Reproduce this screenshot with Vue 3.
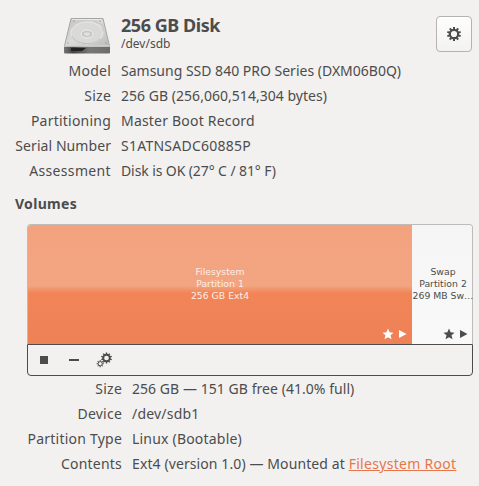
<script setup>
import { ref } from 'vue'

const driveInfo = [
  { label: 'Model', value: 'Samsung SSD 840 PRO Series (DXM06B0Q)', key: 'model' },
  { label: 'Size', value: '256 GB (256,060,514,304 bytes)', key: 'bytes' },
  { label: 'Partitioning', value: 'Master Boot Record', key: 'scheme' },
  { label: 'Serial Number', value: 'S1ATNSADC60885P', key: 'serial' },
  { label: 'Assessment', value: 'Disk is OK (27° C / 81° F)', key: 'health' },
]

const volumes = [
  { id: 1, lines: ['Filesystem', 'Partition 1', '256 GB Ext4'] },
  { id: 2, lines: ['Swap', 'Partition 2', '269 MB Sw…'] },
]

const selected = ref(1)

const volumeInfo = [
  { label: 'Size', value: '256 GB — 151 GB free (41.0% full)', key: 'free' },
  { label: 'Device', value: '/dev/sdb1', key: 'device' },
  { label: 'Partition Type', value: 'Linux (Bootable)', key: 'type' },
  { label: 'Contents', value: 'Ext4 (version 1.0) — Mounted at ', link: 'Filesystem Root', key: 'contents' },
]

const teeth = (count) => Array.from({ length: count }, (_, i) => (i * 360) / count)
</script>

<template>
  <main class="disk">
    <header class="drive">
      <svg class="drive-icon" width="48" height="38" viewBox="0 0 48 38">
        <defs>
          <linearGradient id="lid" x1="0" y1="0" x2="1" y2="1">
            <stop offset="0" stop-color="#c2c2c0" />
            <stop offset=".5" stop-color="#dadad8" />
            <stop offset="1" stop-color="#bcbcba" />
          </linearGradient>
          <linearGradient id="front" x1="0" y1="0" x2="1" y2="0">
            <stop offset="0" stop-color="#777" />
            <stop offset=".2" stop-color="#444" />
            <stop offset=".55" stop-color="#777" />
            <stop offset="1" stop-color="#6c6c6a" />
          </linearGradient>
        </defs>
        <path d="M8 1.5H40L46.500 29H1.500Z" fill="url(#lid)" stroke="#a5a5a3" />
        <path d="M9 2.500H39" stroke="#e8e8e7" />
        <ellipse cx="24" cy="16" rx="16" ry="11" fill="#d9d9d7" stroke="#e8e8e7" />
        <path d="M9 19C12 27 29 30 37 22" fill="none" stroke="#bcbcba" />
        <path d="M31 4L40 8V14" fill="none" stroke="#c4c4c2" />
        <ellipse cx="24" cy="17" rx="6" ry="4" fill="#c8c8c6" stroke="#efefee" />
        <ellipse cx="24" cy="17" rx="3" ry="1.800" fill="#e0e0de" />
        <path d="M1 29.500H47V35.500Q47 36.500 46 36.500H2Q1 36.500 1 35.500Z" fill="url(#front)" />
        <path d="M1.500 29H46.500" stroke="#e8e8e7" />
        <path d="M8 31H23L19 34H8Z" fill="#222" />
        <g fill="#999">
          <circle cx="11" cy="4" r=".7" /><circle cx="37" cy="4" r=".7" />
          <circle cx="5" cy="26" r=".7" /><circle cx="43" cy="26" r=".7" />
        </g>
      </svg>
      <div class="title">
        <h1>256 GB Disk</h1>
        <p>/dev/sdb</p>
      </div>
      <button class="menu" title="Drive options">
        <svg width="16" height="16" viewBox="-8 -8 16 16">
          <circle r="4.200" fill="none" stroke="#4c4c4c" stroke-width="2.200" />
          <rect v-for="a in teeth(10)" :key="a" x="-1" y="-7" width="2" height="2.500" fill="#4c4c4c" :transform="`rotate(${a})`" />
        </svg>
      </button>
    </header>

    <dl class="info">
      <template v-for="row in driveInfo" :key="row.key">
        <dt :class="row.key">{{ row.label }}</dt>
        <dd :class="row.key">{{ row.value }}</dd>
      </template>
    </dl>

    <h2>Volumes</h2>

    <section class="volumes">
      <div class="map">
        <div
          v-for="vol in volumes"
          :key="vol.id"
          class="volume"
          :class="{ selected: selected === vol.id }"
          @click="selected = vol.id"
        >
          <p v-for="line in vol.lines" :key="line">{{ line }}</p>
          <svg class="flags" width="26" height="12" viewBox="0 0 26 12">
            <path d="M6 .5L7.600 4.300L11.500 4.700L8.500 7.300L9.500 11.300L6 9.200L2.500 11.300L3.500 7.300L.5 4.700L4.400 4.300Z" />
            <path d="M17 2L24.500 6L17 10Z" />
          </svg>
        </div>
      </div>
      <div class="tools">
        <svg width="12" height="12"><rect x="2" y="2" width="8" height="8" fill="#4c4c4c" /></svg>
        <svg width="12" height="12"><rect x="1" y="5" width="10" height="2" fill="#4c4c4c" /></svg>
        <svg class="gears" width="17" height="16" viewBox="0 0 17 16">
          <g transform="translate(10.500 6)">
            <circle r="3.300" fill="none" stroke="#4c4c4c" stroke-width="1.900" />
            <rect v-for="a in teeth(10)" :key="a" x="-.7" y="-5.500" width="1.400" height="2" fill="#4c4c4c" :transform="`rotate(${a})`" />
          </g>
          <g transform="translate(4.200 11.700)">
            <circle r="2.100" fill="none" stroke="#4c4c4c" stroke-width="1" />
            <rect v-for="a in teeth(8)" :key="a" x="-.5" y="-3.600" width="1" height="1.300" fill="#4c4c4c" :transform="`rotate(${a})`" />
          </g>
        </svg>
      </div>
    </section>

    <dl class="info partition">
      <template v-for="row in volumeInfo" :key="row.key">
        <dt :class="row.key">{{ row.label }}</dt>
        <dd :class="row.key">{{ row.value }}<a v-if="row.link" href="#">{{ row.link }}</a></dd>
      </template>
    </dl>
  </main>
</template>

<style>
body {
  margin: 0;
  background: #f2f1f0;
}
</style>

<style scoped>
.disk {
  box-sizing: border-box;
  width: 479px;
  height: 486px;
  padding-top: 14px;
  overflow: hidden;
  background: #f2f1f0;
  color: #4c4c4c;
  font: 14px/25px "Noto Sans", sans-serif;
}

h1, h2, p, dl, dd {
  margin: 0;
}

.drive {
  display: flex;
  height: 44px;
  padding: 0 7px 0 63px;
}

.drive-icon {
  margin-top: 3px;
}

.title {
  flex: 1;
  margin-left: 10px;
}

.title h1 {
  font-size: 18px;
  line-height: 23px;
  letter-spacing: -0.45px;
}

.title p {
  font-size: 12px;
  line-height: 14px;
}

.menu {
  display: grid;
  place-items: center;
  box-sizing: border-box;
  width: 36px;
  height: 36px;
  margin-top: 2px;
  padding: 0;
  border: 1px solid #b5b2af;
  border-radius: 4px;
  background: linear-gradient(#fefefe, #f3f2f1);
}

.info {
  display: grid;
  grid-template-columns: 111px 1fr;
  column-gap: 10px;
  grid-auto-rows: 25px;
  white-space: pre;
}

.info dt {
  text-align: right;
  letter-spacing: 0.22px;
}

.info dt.serial {
  letter-spacing: 0.07px;
}

.info dt.health {
  letter-spacing: 0.35px;
}

dd.bytes {
  letter-spacing: 0.03px;
}

dd.scheme, dd.device, dd.type {
  letter-spacing: 0.2px;
}

dd.serial {
  letter-spacing: 0.25px;
}

dd.health {
  letter-spacing: -0.1px;
}

dd.free {
  letter-spacing: 0.05px;
}

dd.contents {
  letter-spacing: 0.1px;
}

.partition {
  grid-template-columns: 122px 1fr;
}

h2 {
  margin: 8px 0 7px 15px;
  font-size: 14px;
  line-height: 26px;
  letter-spacing: 0.3px;
}

.volumes {
  box-sizing: border-box;
  width: 446px;
  height: 152px;
  margin-left: 27px;
}

.map {
  display: grid;
  grid-template-columns: 384px 60px;
  box-sizing: border-box;
  height: 120px;
  border: 1px solid #bebbb8;
  border-bottom: 0;
  border-radius: 4px 4px 0 0;
}

.volume {
  position: relative;
  padding-top: 41px;
  border-radius: 0 3px 0 0;
  background: linear-gradient(#f6f5f5, #f9f9f9);
  font: 9.300px/12px "DejaVu Sans", sans-serif;
  text-align: center;
  white-space: nowrap;
}

.volume p {
  margin-right: -2px;
}

.volume:first-child {
  border-radius: 3px 0 0 0;
}

.volume:first-child p {
  margin-right: 0;
}

.selected {
  background: linear-gradient(#f4a27e, #f2a581 51%, #f18558 57%, #ee8155);
  color: #fdeee7;
}

.flags {
  position: absolute;
  right: 3px;
  bottom: 4px;
  fill: #4c4c4c;
}

.selected .flags {
  right: 4px;
  fill: #fff;
}

.tools {
  display: flex;
  align-items: center;
  gap: 18px;
  box-sizing: border-box;
  height: 32px;
  padding-left: 10px;
  border: 1px solid #4c4c4c;
  border-radius: 0 0 4px 4px;
}

.gears {
  margin-left: -2px;
}

a {
  color: #e8764b;
  letter-spacing: 0.3px;
}
</style>
